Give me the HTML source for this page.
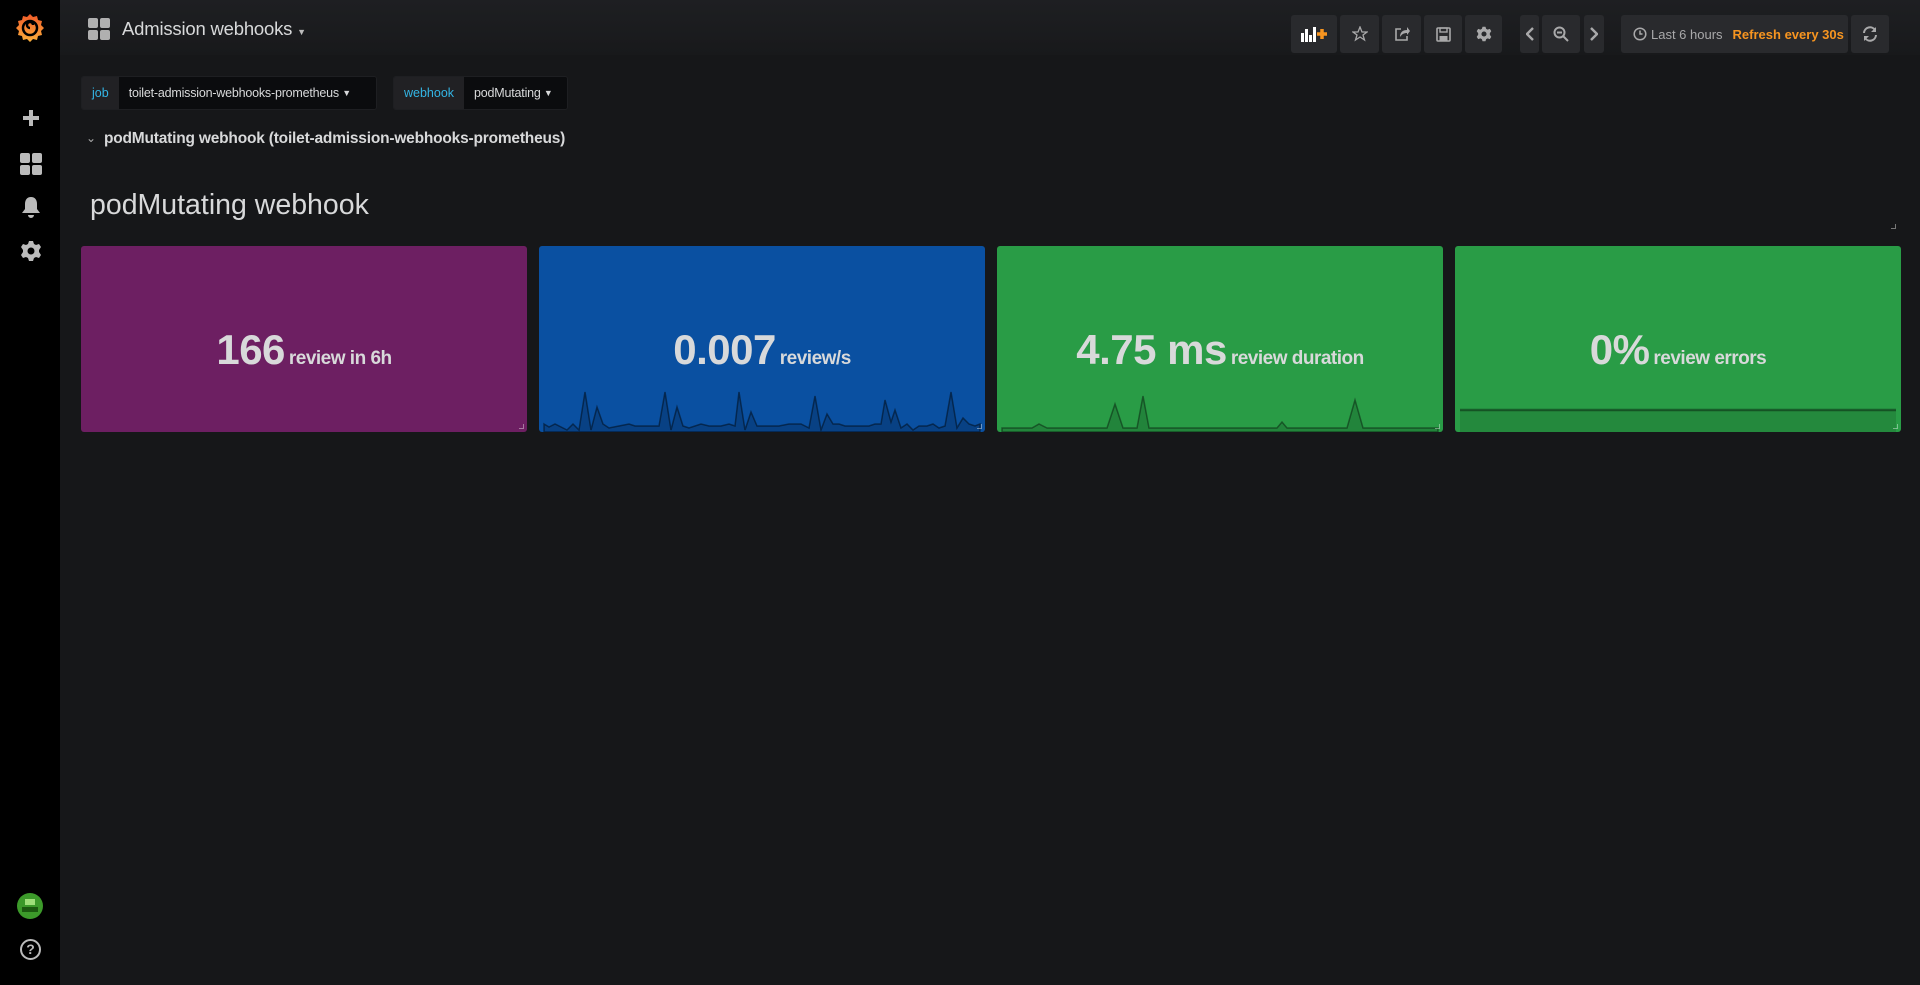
<!DOCTYPE html>
<html><head><meta charset="utf-8"><style>
*{box-sizing:border-box;margin:0;padding:0}
body{width:1920px;height:985px;background:#161719;font-family:"Liberation Sans",sans-serif;color:#d8d9da;position:relative;overflow:hidden}
.side{position:absolute;left:0;top:0;width:60px;height:985px;background:#000}
.nav{position:absolute;left:60px;top:0;right:0;height:55px;background:linear-gradient(#1e1f22,#18191b)}
.btn{position:absolute;top:15px;height:38px;background:#292a2d;border-radius:3px;display:flex;align-items:center;justify-content:center;color:#a9a9aa}
.var{position:absolute;top:76px;height:34px;display:flex;font-size:12.5px;border:1px solid #1e1f22;border-radius:3px;overflow:hidden;white-space:nowrap}
.var .l{background:#212124;color:#33b5e5;display:flex;align-items:center;padding:0 10px}
.var .v{background:#0b0c0e;color:#d8d9da;display:flex;align-items:center;padding:0 8px 0 10px;letter-spacing:-0.2px}
.panel{position:absolute;top:246px;height:186px;width:446px;border-radius:3px;overflow:hidden}
.val{position:absolute;left:0;right:0;top:80px;text-align:center;font-weight:bold;white-space:nowrap;letter-spacing:-0.5px}
.val b{font-size:42px}.val span{font-size:19px}
.panel svg{position:absolute;left:0;bottom:0}
.corner{position:absolute;right:3px;bottom:3px;width:5px;height:5px;border-right:1px solid rgba(255,255,255,.4);border-bottom:1px solid rgba(255,255,255,.4)}
</style></head><body>
<div class="side">
<svg style="position:absolute;left:13px;top:11px" width="34" height="34" viewBox="0 0 34 34"><defs><linearGradient id="g" x1="0" y1="1" x2="0" y2="0"><stop offset="0" stop-color="#fbb03b"/><stop offset="1" stop-color="#f15a29"/></linearGradient></defs><path d="M17 3l3 3 4-1 1 4 4 1-1 4 3 3-3 3 1 4-4 1-1 4-4-1-3 3-3-3-4 1-1-4-4-1 1-4-3-3 3-3-1-4 4-1 1-4 4 1z" fill="url(#g)"/><circle cx="17" cy="17" r="7" fill="none" stroke="#000" stroke-width="2.5"/><path d="M17 17a3 3 0 1 1 3-3" fill="none" stroke="#000" stroke-width="2.5"/></svg>
<div style="position:absolute;left:23px;top:110px;width:16px;height:16px"><div style="position:absolute;left:6px;top:0;width:4px;height:16px;background:#bbb"></div><div style="position:absolute;left:0;top:6px;width:16px;height:4px;background:#bbb"></div></div>
<div style="position:absolute;left:20px;top:153px;width:22px;height:22px;display:grid;grid-template-columns:10px 10px;gap:2px"><i style="background:#bbb;border-radius:2px"></i><i style="background:#bbb;border-radius:2px"></i><i style="background:#bbb;border-radius:2px"></i><i style="background:#bbb;border-radius:2px"></i></div>
<svg style="position:absolute;left:21px;top:196px" width="20" height="22" viewBox="0 0 20 22"><path d="M10 1c-4 0-6 3-6 7v5l-3 4h18l-3-4V8c0-4-2-7-6-7zM7 19a3 3 0 0 0 6 0z" fill="#bbb"/></svg>
<svg style="position:absolute;left:20px;top:240px" width="22" height="22" viewBox="0 0 22 22"><path d="M9 1h4l1 3 2 1 3-1 2 3-2 3v2l2 3-2 3-3-1-2 1-1 3H9l-1-3-2-1-3 1-2-3 2-3v-2L1 7l2-3 3 1 2-1z" fill="#bbb"/><circle cx="11" cy="11" r="3.5" fill="#000"/></svg>
<div style="position:absolute;left:17px;top:893px;width:26px;height:26px;border-radius:50%;background:#3c9a2a;overflow:hidden"><div style="position:absolute;left:8px;top:6px;width:10px;height:6px;background:#9fe07a"></div><div style="position:absolute;left:5px;top:14px;width:16px;height:5px;background:#1c5a10"></div></div>
<div style="position:absolute;left:20px;top:939px;width:21px;height:21px;border:2px solid #bbb;border-radius:50%;color:#bbb;font-size:14px;font-weight:bold;text-align:center;line-height:17px">?</div>
</div>
<div class="nav">
<div style="position:absolute;left:28px;top:18px;width:22px;height:22px;display:grid;grid-template-columns:10px 10px;gap:2px"><i style="background:#b0b0b0;border-radius:2px"></i><i style="background:#b0b0b0;border-radius:2px"></i><i style="background:#b0b0b0;border-radius:2px"></i><i style="background:#b0b0b0;border-radius:2px"></i></div>
<div style="position:absolute;left:62px;top:18px;font-size:18.5px;color:#d8d9da;letter-spacing:-0.2px">Admission webhooks <span style="font-size:9px;color:#bbb">▼</span></div>
</div>
<div class="btn" style="left:1291px;width:46px"><svg width="26" height="16" viewBox="0 0 26 16"><rect x="0" y="7" width="3" height="9" fill="#fff"/><rect x="4" y="3" width="3" height="13" fill="#fff"/><rect x="8" y="9" width="3" height="7" fill="#fff"/><rect x="12" y="1" width="3" height="15" fill="#fff"/><path d="M16 8h10M21 3v10" stroke="#f79520" stroke-width="3.5"/></svg></div>
<div class="btn" style="left:1340px;width:39px"><svg width="16" height="16" viewBox="0 0 16 16"><path d="M8 1l2 5h5l-4 3 1.5 5L8 11l-4.5 3L5 9 1 6h5z" fill="none" stroke="#a9a9aa" stroke-width="1.3"/></svg></div>
<div class="btn" style="left:1382px;width:39px"><svg width="16" height="16" viewBox="0 0 16 16"><path d="M7 3H2v11h11v-4" fill="none" stroke="#a9a9aa" stroke-width="1.6"/><path d="M6 11c0-5 3-7 7-7V1l3 4-3 4V7c-3 0-5 1-7 4z" fill="#a9a9aa"/></svg></div>
<div class="btn" style="left:1424px;width:38px"><svg width="15" height="15" viewBox="0 0 15 15"><rect x="1" y="1" width="13" height="13" rx="1" fill="none" stroke="#a9a9aa" stroke-width="1.6"/><rect x="4" y="1" width="7" height="4" fill="none" stroke="#a9a9aa" stroke-width="1.4"/><rect x="3.5" y="9" width="8" height="5" fill="#a9a9aa"/></svg></div>
<div class="btn" style="left:1465px;width:37px"><svg width="16" height="16" viewBox="0 0 22 22"><path d="M9 1h4l1 3 2 1 3-1 2 3-2 3v2l2 3-2 3-3-1-2 1-1 3H9l-1-3-2-1-3 1-2-3 2-3v-2L1 7l2-3 3 1 2-1z" fill="#a9a9aa"/><circle cx="11" cy="11" r="3.5" fill="#292a2d"/></svg></div>
<div class="btn" style="left:1520px;width:19px"><svg width="8" height="14" viewBox="0 0 8 14"><path d="M7 1L1 7l6 6" fill="none" stroke="#a9a9aa" stroke-width="2.4"/></svg></div>
<div class="btn" style="left:1542px;width:38px"><svg width="16" height="16" viewBox="0 0 16 16"><circle cx="6.5" cy="6.5" r="5" fill="none" stroke="#a9a9aa" stroke-width="2"/><path d="M10 10l5 5M4 6.5h5" stroke="#a9a9aa" stroke-width="2"/></svg></div>
<div class="btn" style="left:1584px;width:20px"><svg width="8" height="14" viewBox="0 0 8 14"><path d="M1 1l6 6-6 6" fill="none" stroke="#a9a9aa" stroke-width="2.4"/></svg></div>
<div class="btn" style="left:1621px;width:227px;font-size:13px;justify-content:flex-start;padding-left:12px;white-space:nowrap"><svg width="14" height="14" viewBox="0 0 14 14"><circle cx="7" cy="7" r="5.8" fill="none" stroke="#a9a9aa" stroke-width="1.5"/><path d="M7 3.5V7h2.5" fill="none" stroke="#a9a9aa" stroke-width="1.5"/></svg><span style="margin-left:4px">Last 6 hours</span><span style="margin-left:10px;color:#f79520;font-weight:bold">Refresh every 30s</span></div>
<div class="btn" style="left:1851px;width:38px"><svg width="16" height="16" viewBox="0 0 16 16"><path d="M2 7a6 6 0 0 1 11-3M14 9a6 6 0 0 1-11 3" fill="none" stroke="#a9a9aa" stroke-width="2"/><path d="M14 1v5H9zM2 15v-5h5z" fill="#a9a9aa"/></svg></div>

<div class="var" style="left:81px;width:296px"><div class="l">job</div><div class="v" style="flex:1">toilet-admission-webhooks-prometheus&nbsp;<span style="font-size:9px">▼</span></div></div>
<div class="var" style="left:393px;width:175px"><div class="l">webhook</div><div class="v" style="flex:1">podMutating&nbsp;<span style="font-size:9px">▼</span></div></div>

<div style="position:absolute;left:86px;top:131px;font-size:12px;color:#aaa">⌄</div>
<div style="position:absolute;left:104px;top:130px;font-size:15.5px;font-weight:bold;color:#d8d9da;letter-spacing:-0.2px;white-space:nowrap">podMutating webhook (toilet-admission-webhooks-prometheus)</div>
<div style="position:absolute;left:90px;top:189px;font-size:28.5px;color:#d8d9da">podMutating webhook</div>
<div style="position:absolute;left:1891px;top:224px;width:5px;height:5px;border-right:1px solid #777;border-bottom:1px solid #777"></div>

<div class="panel" style="left:81px;background:#6d1f62"><div class="val"><b>166</b> <span>review in 6h</span></div><div class="corner"></div></div>
<div class="panel" style="left:539px;background:#0a50a1"><div class="val"><b>0.007</b> <span>review/s</span></div>
<svg width="446" height="50" viewBox="0 0 446 50"><path d="M5 42L10 45 16 42 28 48 34 42 40 48 46 10 52 48 58 25 64 42 70 46 80 44 90 42 96 44 120 44 126 10 132 48 138 25 144 44 150 46 162 42 170 44 182 44 190 42 196 44 200 10 206 48 212 30 218 44 240 44 250 42 262 42 270 46 276 14 282 48 288 32 294 42 300 42 306 44 330 44 336 42 342 42 346 18 352 40 356 28 362 46 368 42 374 48 380 44 388 44 394 42 400 46 406 44 412 10 418 46 424 36 430 42 436 44 441 42V50H5z" fill="rgba(0,0,0,.18)" stroke="rgba(0,0,0,.45)" stroke-width="1.5"/></svg><div class="corner"></div></div>
<div class="panel" style="left:997px;background:#299c46"><div class="val"><b>4.75 ms</b> <span>review duration</span></div>
<svg width="446" height="50" viewBox="0 0 446 50"><path d="M5 46L35 46 42 42 50 46 110 46 118 22 126 46 140 46 146 14 152 46 280 46 285 40 290 46 350 46 358 18 366 46 441 46V50H5z" fill="rgba(0,0,0,.15)" stroke="rgba(0,0,0,.4)" stroke-width="1.5"/></svg><div class="corner"></div></div>
<div class="panel" style="left:1455px;background:#299c46"><div class="val"><b>0%</b> <span>review errors</span></div>
<svg width="446" height="50" viewBox="0 0 446 50"><path d="M5 28H441V50H5z" fill="rgba(0,0,0,.12)"/><path d="M5 28H441" stroke="rgba(0,0,0,.4)" stroke-width="2.5"/></svg><div class="corner"></div></div>
</body></html>
